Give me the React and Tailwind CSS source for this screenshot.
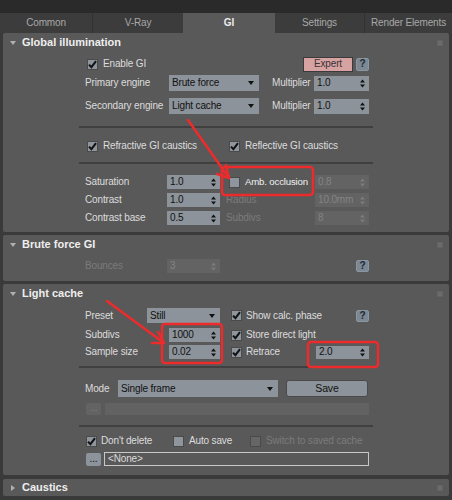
import React from "react";

const PANEL = "bg-[#595959]";

function Check({ checked, disabled }) {
  return (
    <div
      className={`flex items-center justify-center w-[11px] h-[11px] shrink-0 border border-[#4a4a4a] ${
        disabled ? "bg-[#666666]" : "bg-[#8e959c]"
      }`}
    >
      {checked && (
        <svg width="9" height="9" viewBox="0 0 9 9">
          <path d="M1 4.6 L3.4 7.2 L8 1.2" fill="none" stroke="#111" strokeWidth="2" />
        </svg>
      )}
    </div>
  );
}

function SpinArrows({ color }) {
  return (
    <svg width="5" height="9" viewBox="0 0 5 9" className="shrink-0">
      <path d="M0 3.5 L2.5 0.5 L5 3.5 Z" fill={color} />
      <path d="M0 5.5 L2.5 8.5 L5 5.5 Z" fill={color} />
    </svg>
  );
}

function Spinner({ value, w, h = "h-[14px]", disabled }) {
  return (
    <div
      className={`flex items-center justify-between pl-[3px] pr-[4px] shrink-0 ${w} ${h} ${
        disabled ? "bg-[#636363] text-[#838383]" : "bg-[#8c939a] text-[#111111]"
      }`}
    >
      <span>{value}</span>
      <SpinArrows color={disabled ? "#7d7d7d" : "#111"} />
    </div>
  );
}

function Dropdown({ value, w, h = "h-[16px]" }) {
  return (
    <div
      className={`flex items-center justify-between pl-[3px] pr-[5px] shrink-0 bg-[#8c939a] text-[#111111] ${w} ${h}`}
    >
      <span>{value}</span>
      <svg width="6" height="4" viewBox="0 0 6 4">
        <path d="M0 0 L6 0 L3 4 Z" fill="#111" />
      </svg>
    </div>
  );
}

function Help({ h = "h-[13px]" }) {
  return (
    <div
      className={`flex items-center justify-center w-[13px] ${h} shrink-0 rounded-[2px] bg-[#7c8894] border border-[#8a96a2] text-[#1d2733] text-[10px] font-bold`}
    >
      ?
    </div>
  );
}

function Separator({ mt }) {
  return <div className={`${mt} ml-[76px] w-[294px] h-[2px] bg-[#404040]`} />;
}

function Panel({ title, open = true, pb, children }) {
  return (
    <div className={`${PANEL} rounded-[2px] flex flex-col ${pb}`}>
      <div className="relative flex items-center h-[19px] shrink-0">
        <div className="w-[19px] flex justify-center pl-[1px]">
          {open ? (
            <svg width="6" height="4" viewBox="0 0 6 4">
              <path d="M0 0 L6 0 L3 4 Z" fill="#b0b0b0" />
            </svg>
          ) : (
            <svg width="4" height="6" viewBox="0 0 4 6">
              <path d="M0 0 L4 3 L0 6 Z" fill="#b0b0b0" />
            </svg>
          )}
        </div>
        <span className="text-[11px] font-bold text-[#eeeeee] tracking-normal">{title}</span>
        <div className="ml-auto mr-[6px] w-[6px] h-[6px] bg-[#6b6b6b] border border-[#626262]" />
      </div>
      {children}
    </div>
  );
}

const tabs = [
  { name: "Common", w: "w-[92px]" },
  { name: "V-Ray", w: "w-[91px]" },
  { name: "GI", w: "w-[92px]", active: true },
  { name: "Settings", w: "w-[89px]" },
  { name: "Render Elements", w: "w-[88px]" },
];

export default function App() {
  return (
    <div className="relative w-[452px] h-[500px] overflow-hidden bg-[#3a3a3a] font-['Liberation_Sans',Arial,sans-serif] text-[10px] tracking-[-0.15px] text-[#dcdcdc] leading-none">
      <div className="h-[13px] bg-[#2a2a2a]" />
      <div className="flex h-[20px] bg-[#3c3c3c]">
        {tabs.map((t, i) => (
          <div
            key={t.name}
            className={`flex items-center justify-center ${t.w} ${
              t.active ? "bg-[#595959] text-[#ececec] font-bold" : "text-[#a8a8a8]"
            } ${i > 0 && !t.active && !tabs[i - 1].active ? "border-l border-[#323232]" : ""}`}
          >
            {t.name}
          </div>
        ))}
      </div>

      <div className="flex flex-col px-[3px]">
        {/* Global illumination */}
        <Panel title="Global illumination" pb="pb-[7px]">
          <div className="flex items-center h-[16px] mt-[4px] pl-[84px]">
            <div className="flex items-center w-[216px]">
              <Check checked />
              <span className="ml-[5px]">Enable GI</span>
            </div>
            <div className="flex items-center justify-center w-[50px] h-[15px] bg-[#d6a2a2] border border-[#3a3a3a] text-[#3a3434]">
              Expert
            </div>
            <div className="ml-[3px]">
              <Help />
            </div>
          </div>
          <div className="flex items-center h-[16px] mt-[3px] pl-[82px]">
            <span className="w-[84px]">Primary engine</span>
            <Dropdown value="Brute force" w="w-[90px]" />
            <span className="ml-[13px] w-[42px]">Multiplier</span>
            <Spinner value="1.0" w="w-[55px]" h="h-[15px]" />
          </div>
          <div className="flex items-center h-[16px] mt-[7px] pl-[82px]">
            <span className="w-[84px] whitespace-nowrap">Secondary engine</span>
            <Dropdown value="Light cache" w="w-[90px]" />
            <span className="ml-[13px] w-[42px]">Multiplier</span>
            <Spinner value="1.0" w="w-[55px]" h="h-[15px]" />
          </div>
          <Separator mt="mt-[12px]" />
          <div className="flex items-center h-[16px] mt-[10px] pl-[84px]">
            <div className="flex items-center w-[142px]">
              <Check checked />
              <span className="ml-[5px]">Refractive GI caustics</span>
            </div>
            <Check checked />
            <span className="ml-[5px]">Reflective GI caustics</span>
          </div>
          <Separator mt="mt-[8px]" />
          <div className="flex items-center h-[14px] mt-[11px] pl-[82px]">
            <span className="w-[82px]">Saturation</span>
            <Spinner value="1.0" w="w-[53px]" />
            <div className="ml-[9px]">
              <Check />
            </div>
            <span className="ml-[5px] w-[64px] whitespace-nowrap text-[9.6px] text-[#f2f2f2]">
              Amb. occlusion
            </span>
            <div className="ml-[6px]">
              <Spinner value="0.8" w="w-[54px]" disabled />
            </div>
          </div>
          <div className="flex items-center h-[14px] mt-[4px] pl-[82px]">
            <span className="w-[82px]">Contrast</span>
            <Spinner value="1.0" w="w-[53px]" />
            <span className="ml-[6px] w-[89px] text-[#7b7b7b]">Radius</span>
            <Spinner value="10.0mm" w="w-[54px]" disabled />
          </div>
          <div className="flex items-center h-[14px] mt-[4px] pl-[82px]">
            <span className="w-[82px]">Contrast base</span>
            <Spinner value="0.5" w="w-[53px]" />
            <span className="ml-[6px] w-[89px] text-[#7b7b7b]">Subdivs</span>
            <Spinner value="8" w="w-[54px]" disabled />
          </div>
        </Panel>

        {/* Brute force GI */}
        <div className="mt-[3px]">
          <Panel title="Brute force GI" pb="pb-[8px]">
            <div className="flex items-center h-[14px] mt-[5px] pl-[82px]">
              <span className="w-[82px] text-[#7b7b7b]">Bounces</span>
              <Spinner value="3" w="w-[53px]" disabled />
              <div className="ml-[136px]">
                <Help h="h-[12px]" />
              </div>
            </div>
          </Panel>
        </div>

        {/* Light cache */}
        <div className="mt-[3px]">
          <Panel title="Light cache" pb="pb-[9px]">
            <div className="flex items-center h-[15px] mt-[5px] pl-[82px]">
              <span className="w-[62px]">Preset</span>
              <Dropdown value="Still" w="w-[73px]" h="h-[15px]" />
              <div className="ml-[11px]">
                <Check checked />
              </div>
              <span className="ml-[4px] w-[110px]">Show calc. phase</span>
              <Help h="h-[12px]" />
            </div>
            <div className="flex items-center h-[14px] mt-[5px] pl-[82px]">
              <span className="w-[84px]">Subdivs</span>
              <Spinner value="1000" w="w-[51px]" />
              <div className="ml-[11px]">
                <Check checked />
              </div>
              <span className="ml-[4px]">Store direct light</span>
            </div>
            <div className="flex items-center h-[14px] mt-[3px] pl-[82px]">
              <span className="w-[84px]">Sample size</span>
              <Spinner value="0.02" w="w-[51px]" />
              <div className="ml-[11px]">
                <Check checked />
              </div>
              <span className="ml-[4px] w-[70px]">Retrace</span>
              <Spinner value="2.0" w="w-[53px]" h="h-[13px]" />
            </div>
            <Separator mt="mt-[7px]" />
            <div className="flex items-center h-[17px] mt-[12px] pl-[82px]">
              <span className="w-[33px]">Mode</span>
              <Dropdown value="Single frame" w="w-[160px]" h="h-[17px]" />
              <div className="ml-[8px] flex items-center justify-center w-[82px] h-[17px] rounded-[3px] bg-[#8c939a] border border-[#4a4a4a] text-[#111] text-[10.5px]">
                Save
              </div>
            </div>
            <div className="flex items-center h-[12px] mt-[6px] pl-[83px]">
              <div className="flex items-end justify-center w-[15px] h-[12px] rounded-[2px] bg-[#636363] text-[#7e7e7e] pb-[2px]">
                ...
              </div>
              <div className="ml-[4px] w-[264px] h-[12px] bg-[#626262]" />
            </div>
            <Separator mt="mt-[10px]" />
            <div className="flex items-center h-[16px] mt-[6px] pl-[83px]">
              <div className="flex items-center w-[87px]">
                <Check checked />
                <span className="ml-[4px]">Don't delete</span>
              </div>
              <div className="flex items-center w-[77px]">
                <Check />
                <span className="ml-[5px]">Auto save</span>
              </div>
              <Check disabled />
              <span className="ml-[5px] text-[#7b7b7b]">Switch to saved cache</span>
            </div>
            <div className="flex items-center h-[14px] mt-[3px] pl-[83px]">
              <div className="flex items-end justify-center w-[15px] h-[13px] rounded-[2px] bg-[#8c939a] text-[#111] pb-[2px]">
                ...
              </div>
              <div className="ml-[3px] flex items-center w-[265px] h-[14px] border border-[#c8c8c8] pl-[3px]">
                &lt;None&gt;
              </div>
            </div>
          </Panel>
        </div>

        {/* Caustics */}
        <div className="mt-[4px]">
          <div className={`${PANEL} rounded-[2px] relative flex items-center h-[17px]`}>
            <div className="w-[19px] flex justify-center pl-[1px]">
              <svg width="4" height="6" viewBox="0 0 4 6">
                <path d="M0 0 L4 3 L0 6 Z" fill="#b0b0b0" />
              </svg>
            </div>
            <span className="text-[11px] font-bold text-[#eeeeee] tracking-normal">Caustics</span>
            <div className="ml-auto mr-[6px] w-[6px] h-[6px] bg-[#6b6b6b] border border-[#626262]" />
          </div>
        </div>
      </div>

      {/* red callouts drawn over the panel */}
      <svg
        className="absolute left-0 top-0 pointer-events-none"
        width="452"
        height="500"
        viewBox="0 0 452 500"
      >
        <g fill="none" stroke="#ee2b2b" strokeWidth="2.5" strokeLinecap="round" strokeLinejoin="round">
          <rect x="222" y="167" width="91" height="28" rx="3" />
          <rect x="162" y="324" width="60" height="39" rx="3" />
          <rect x="308" y="342" width="70" height="25" rx="3" />
          <path d="M188 120 L229 178" />
          <path d="M229 178 L226 165 M229 178 L217 174" />
          <path d="M107 301 L164 343" />
          <path d="M164 343 L158 332 M164 343 L152 343" />
        </g>
      </svg>
    </div>
  );
}
